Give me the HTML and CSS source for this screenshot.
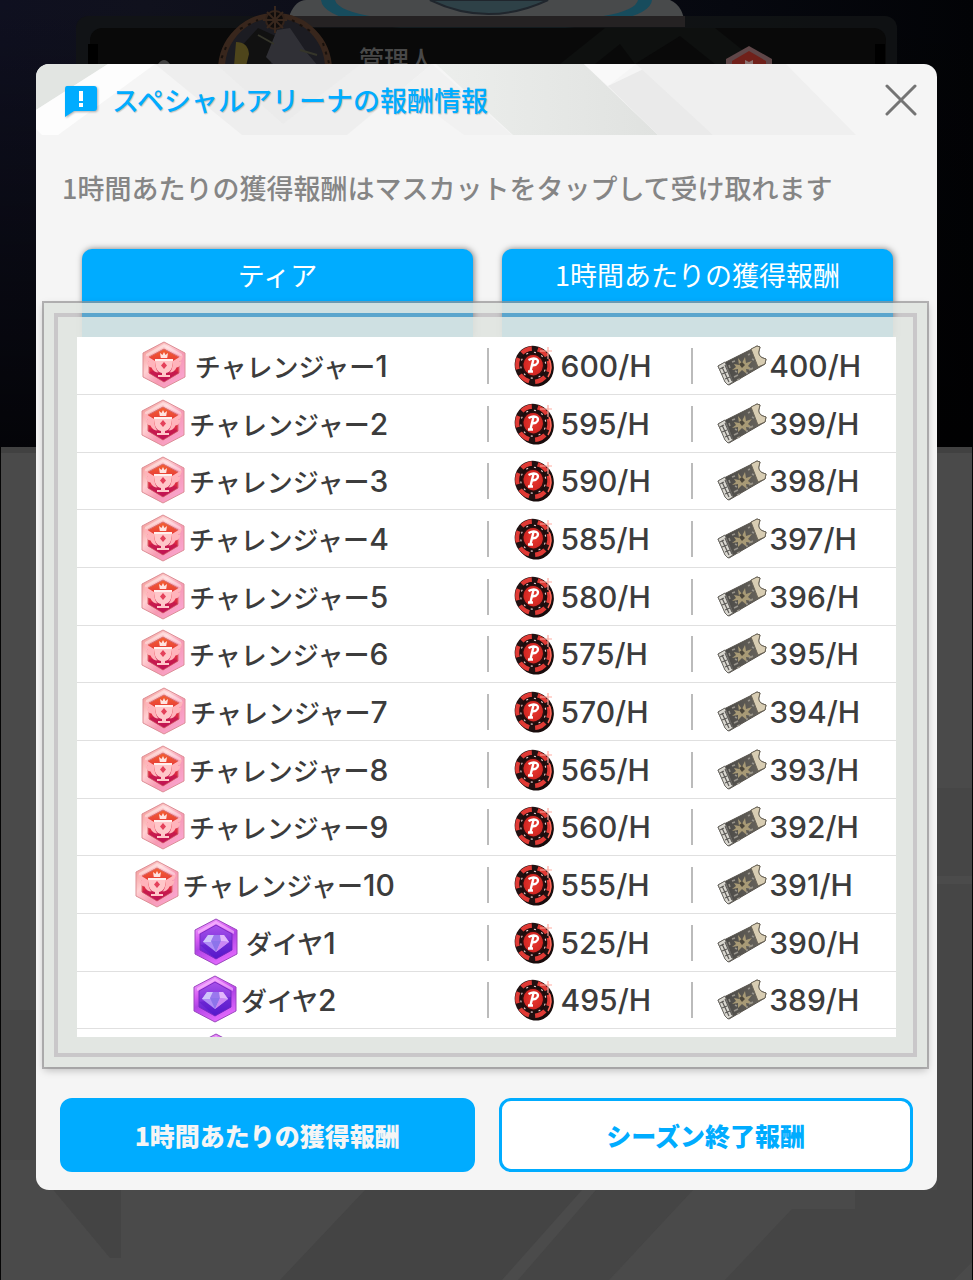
FILE: index.html
```html
<!DOCTYPE html>
<html lang="ja">
<head>
<meta charset="utf-8">
<meta name="viewport" content="width=device-width, initial-scale=1">
<title>スペシャルアリーナの報酬情報</title>
<link rel="stylesheet" href="styles.css">
</head>
<body>
<svg class="defs" aria-hidden="true">
  <defs>
    <linearGradient id="rim-red" x1="0" y1="0" x2="1" y2="1"><stop offset="0" stop-color="#f08a86"/><stop offset=".35" stop-color="#ffd0d2"/><stop offset=".6" stop-color="#f79ab4"/><stop offset="1" stop-color="#fba8dc"/></linearGradient>
    <linearGradient id="core-red" x1="0" y1="0" x2="0" y2="1"><stop offset="0" stop-color="#f4622f"/><stop offset=".5" stop-color="#e2303c"/><stop offset="1" stop-color="#c9145a"/></linearGradient>
    <linearGradient id="rim-violet" x1="0" y1="0" x2=".4" y2="1"><stop offset="0" stop-color="#f9b4ff"/><stop offset=".4" stop-color="#d75cf4"/><stop offset=".6" stop-color="#b043e6"/><stop offset="1" stop-color="#df66fb"/></linearGradient>
    <linearGradient id="core-violet" x1="0" y1="0" x2="0" y2="1"><stop offset="0" stop-color="#a850ea"/><stop offset="1" stop-color="#5a1bd0"/></linearGradient>
    <radialGradient id="chip-red"><stop offset="0" stop-color="#e8382e"/><stop offset="1" stop-color="#cf2421"/></radialGradient>
    <linearGradient id="ticket-dark" x1="0" y1="0" x2="1" y2="0"><stop offset="0" stop-color="#454442"/><stop offset="1" stop-color="#6c6860"/></linearGradient>

    <symbol id="challenger" viewBox="0 0 44 48">
      <path d="M22 1 43 12v24L22 47 1 36V12z" fill="url(#rim-red)" stroke="#dd8f96" stroke-width="1"/>
      <path d="M22 3 40 13v3L22 6 4 16v-3z" fill="#fff" opacity=".4"/>
      <path d="M22 8 37 16v16l-15 9-15-9V16z" fill="url(#core-red)" stroke="#d96a6f" stroke-width="1"/>
      <path d="M22 41 7 32l7-4h16l7 4z" fill="#b80f52" opacity=".5"/>
      <path d="m18 12 2.500 2L22 11l1.500 3 2.500-2-.8 5h-6.400z" fill="#ffe3df"/>
      <path d="M13 18h18c0 9-2 13-7 14v2h4v2H16v-2h4v-2c-5-1-7-5-7-14z" fill="#ffc6c9"/>
      <path d="M13 20 3 14c.5 4 2 6 4 7-1.500 0-2 0-2.500-.5.5 4 2.500 5.500 5 6 1 3 4 5 7 5-2-2-3.500-6-3.500-11.500zM31 20l10-6c-.5 4-2 6-4 7 1.500 0 2 0 2.500-.5-.5 4-2.500 5.500-5 6-1 3-4 5-7 5 2-2 3.500-6 3.500-11.500z" fill="#ffb4bb"/>
      <path d="M13 18h18v2H13z" fill="#fff0ee"/>
      <path d="m22 21 3 3.500-3 3.500-3-3.500z" fill="#e4405a"/>
    </symbol>
    <symbol id="diamond" viewBox="0 0 44 48">
      <path d="M22 1 43 12v24L22 47 1 36V12z" fill="url(#rim-violet)" stroke="#9a48bd" stroke-width="1"/>
      <path d="M22 3 40 13v3L22 6 4 16v-3z" fill="#ffd6ff" opacity=".5"/>
      <path d="M22 7 38 16v16l-16 9-16-9V16z" fill="url(#core-violet)" stroke="#7b2bc4" stroke-width="1"/>
      <path d="M6 27 22 41 38 32V22z" fill="#4c12c4" opacity=".35"/>
      <path d="M14 17h16l5 7-13 10L9 24z" fill="#b08ef6"/>
      <path d="m14 17-5 7h8l3-7z" fill="#cfc4fb"/><path d="M20 17h6l1 6H17z" fill="#9a78ee"/><path d="m26 17 1 6 8 1-5-7z" fill="#e2b6fb"/><path d="m17 23 5 11 5-11z" fill="#8d74ea"/><path d="m27 23-5 11 13-10z" fill="#cb86f4"/>
    </symbol>
    <symbol id="chip" viewBox="0 0 42 44">
      <g transform="rotate(-16 21 22)">
        <ellipse cx="22" cy="23" rx="18.500" ry="20" fill="#180c0c"/>
        <ellipse cx="20.500" cy="21" rx="18.500" ry="19.500" fill="#211112"/>
        <ellipse cx="20.500" cy="21" rx="15.500" ry="16.500" fill="none" stroke="#e03a35" stroke-width="5" stroke-dasharray="11 5.800"/>
        <ellipse cx="20.500" cy="21" rx="12.500" ry="13" fill="none" stroke="#1c0d0d" stroke-width="3"/>
        <ellipse cx="20.500" cy="21" rx="12.500" ry="13" fill="none" stroke="#e9cfcf" stroke-width="1.200" stroke-dasharray="2 6"/>
        <ellipse cx="20.500" cy="21" rx="10.500" ry="11" fill="url(#chip-red)" stroke="#2b0f0f" stroke-width="1.500"/>
      </g>
      <path d="M17.500 27 20.500 15M15.500 16c6-3 11-1 9 3-1.500 2.500-4 2.500-6 2M15 27.500h5" fill="none" stroke="#fff" stroke-width="2.400"/>
      <path d="M27 7h12M35 3v12" stroke="#ffaca2" stroke-width="1.200"/><path d="M36 15c3 6 2 13-1 18" fill="none" stroke="#ff6c5c" stroke-width="1.500"/>
    </symbol>
    <symbol id="ticket" viewBox="0 0 50 42">
      <path d="M1 21 35 4l5-3 3 1-1 4c-1 3 1 6 4 7l3 1-1 5L12 40l-3-2z" fill="url(#ticket-dark)" stroke="#57534c" stroke-width="1"/>
      <path d="m34 4 6-3 3 1-1 4c-1 3 1 6 4 7l3 1-1 5-7 3z" fill="#d8cdb3" stroke="#6b6558" stroke-width="1"/>
      <path d="m1 21 7-4 8 20-5 3-3-3z" fill="#d9d7d0" stroke="#6a6863" stroke-width="1"/>
      <path d="m5 22 7 15M8 20l7 16M3 24l4-2M5 29l5-2M8 34l5-2" stroke="#5d5b58" stroke-width="1.200"/>
      <path d="m17 19 5 1-1-7 4 5 3-6 1 6 6-2-4 5 5 4-7-1 1 5-5-4-4 4 0-5-6 1 4-3z" fill="#a89a76"/>
      <path d="m22 19 3-2 3 3-3 3z" fill="#4d473b"/>
      <path d="m15 17 3-1M17 32l4-2M31 10l2-1M32 25l4-2M18 26l2 1M29 28l2 0M12 20l1 3M35 14l2 1M20 35l3-1" stroke="#96928a" stroke-width="1.500"/>
    </symbol>
  </defs>
</svg>

<svg class="scene" viewBox="0 0 973 1280" preserveAspectRatio="none" aria-hidden="true">
  <defs>
    <linearGradient id="night" x1="0" y1="0" x2="1" y2="0"><stop offset="0" stop-color="#0f1020"/><stop offset=".15" stop-color="#10111d"/><stop offset=".75" stop-color="#06080f"/><stop offset="1" stop-color="#020306"/></linearGradient>
    <linearGradient id="dusk" x1="0" y1="0" x2="0" y2="1"><stop offset="0" stop-color="#000" stop-opacity="0"/><stop offset="1" stop-color="#000" stop-opacity=".75"/></linearGradient>
    <clipPath id="avatar"><circle cx="275" cy="68" r="50"/></clipPath>
  </defs>
  <path d="M0 0h973v450H0z" fill="url(#night)"/>
  <path d="M0 0h973v450H0z" fill="url(#dusk)"/>
  <path d="M290 14Q296 0 306 0h364q14 6 15 27H290z" fill="#484a4b"/>
  <path d="M321 0q3 30 167 32Q650 28 652 0h-14q-4 22-150 24Q340 22 335 0z" fill="#174c5d"/>
  <path d="M430 0q58 28 118 0z" fill="#2e4147" stroke="#20262d" stroke-width="2"/>
  <rect x="76" y="16" width="821" height="60" rx="12" fill="#111415" opacity=".86"/>
  <path d="M290 16h395v11H290z" fill="#252223"/>
  <rect x="90" y="28" width="796" height="50" rx="12" fill="#090909"/>
  <path d="m560 64 45-36h110l45 36h-45l-35-28-45 28-15-20-25 20z" fill="#0e100f"/>
  <path d="M88 44h10v20H88zM875 44h10v20h-10z" fill="#000"/>
  <path d="M158 64q6-8 12 0z" fill="#414141"/>
  <circle cx="275" cy="70" r="53" fill="#191817" stroke="#38261c" stroke-width="8"/>
  <g clip-path="url(#avatar)"><path d="M225 10h100v60H225z" fill="#1c1c22"/><path d="m238 50 20-22 22 10-12 32h-30z" fill="#111"/><path d="m277 30 13-2 17 25 12 14h-43l-10-10z" fill="#303036"/><path d="M236 42q12 0 13 12l-3 12h-12z" fill="#4e451b"/><path d="m258 35 16 9M300 50l17 5" stroke="#35352a" stroke-width="2"/></g>
  <path d="M240 29 258 20M226 47l-6 15M292 20l20 12M323 43l6 20" stroke="#18110d" stroke-width="2" stroke-dasharray="3 6"/>
  <circle cx="275" cy="20" r="9" fill="#100d0c" stroke="#33231a" stroke-width="2"/>
  <path d="M275 6v27M263 20h24M267 12l16 16M283 12l-16 16" stroke="#38271d" stroke-width="2"/>
  <text class="scene-name" x="359" y="69">管理人</text>
  <path d="m749 46 23 13v15h-46V59z" fill="#5f4648"/><path d="m749 51 17 10v9h-34v-9z" fill="#70201a"/><path d="m745 60 4 2 4-2v6h-8z" fill="#8b7473"/>
  <path d="M0 447h973v833H0z" fill="#4a4a4a"/>
  <path d="M0 447h973v6H0z" fill="#414141"/>
  <path d="M0 1010h36l60 150H0zM937 788h36v492h-36z" fill="#464646"/>
  <path d="M937 876h36v8h-36z" fill="#4b4b4b"/>
  <path d="M45 1180h76v78h-11zM365 1190h232l-88 90H280z" fill="#444"/>
  <path d="M690 1190h283v90H610z" fill="#4a4a4a"/>
  <path d="M597 1190h96l-84 90H502z" fill="#454545"/>
  <path d="M582 1190h14l-78 90h-16z" fill="#4b4b4b"/>
  <path d="M855 1190v19h-63l-67 71h229l19-19v-71z" fill="#454545"/>
  <path d="M0 447h1v833H0zM972 447h1v833h-1z" fill="#050505"/>
</svg>

<main class="dialog" role="dialog" aria-labelledby="title">
  <header class="dialog-head">
    <svg class="facets" viewBox="0 0 901 71" preserveAspectRatio="none" aria-hidden="true">
      <defs><linearGradient id="facet" x1="0" y1="0" x2="1" y2="0"><stop offset="0" stop-color="#eceeec"/><stop offset="1" stop-color="#e0e2e0"/></linearGradient></defs>
      <path d="M0 0h72L0 46z" fill="#e2e5e2"/>
      <path d="M72 0h47L22 71H6l-6-6V46z" fill="#fdfdfd"/>
      <path d="M119 0h277l-85 71H206z" fill="#eee"/>
      <path d="M180 0h145l-78 60z" fill="#ebebeb"/>
      <path d="m396 0 80 71h-48l-62-46z" fill="#f1f1f1"/>
      <path d="M400 0h148l74 71H477z" fill="url(#facet)"/>
      <path d="M548 0h52l-28 22z" fill="#f9f9f9"/>
      <path d="m572 22 46-22 59 71h-55z" fill="#eaeaea"/>
      <path d="M600 0h150l70 71H677z" fill="#efefef"/>
    </svg>
    <svg class="notice" viewBox="0 0 34 32" aria-hidden="true"><path d="M3 0h27q3 0 3 3v19q0 3-3 3H10l-9 6V3q0-3 2-3z" fill="#00acff"/><path d="M15 5h4v10h-4zM15 17h4v4h-4z" fill="#fff"/></svg>
    <h1 class="title" id="title">スペシャルアリーナの報酬情報</h1>
    <button class="close" type="button" aria-label="閉じる"><svg viewBox="0 0 32 32" aria-hidden="true"><path d="m2 2 28 28M30 2 2 30" fill="none" stroke="#747474" stroke-width="3" stroke-linecap="round"/></svg></button>
  </header>

  <p class="lead">1時間あたりの獲得報酬はマスカットをタップして受け取れます</p>

  <div class="columns">
    <div class="column-tab">ティア</div>
    <div class="column-tab">1時間あたりの獲得報酬</div>
  </div>

  <section class="frame">
    <div class="frame-inner">
      <div class="scroller">
        <table class="rewards" aria-label="1時間あたりの獲得報酬">
          <tbody>
            <tr><td class="tier"><span class="item long"><svg class="badge"><use href="#challenger"/></svg><span>チャレンジャー<span class="num">1</span></span></span></td><td><span class="item num"><svg class="chip"><use href="#chip"/></svg>600/H</span></td><td><span class="item num"><svg class="ticket"><use href="#ticket"/></svg>400/H</span></td></tr>
            <tr><td class="tier"><span class="item long"><svg class="badge"><use href="#challenger"/></svg><span>チャレンジャー<span class="num">2</span></span></span></td><td><span class="item num"><svg class="chip"><use href="#chip"/></svg>595/H</span></td><td><span class="item num"><svg class="ticket"><use href="#ticket"/></svg>399/H</span></td></tr>
            <tr><td class="tier"><span class="item long"><svg class="badge"><use href="#challenger"/></svg><span>チャレンジャー<span class="num">3</span></span></span></td><td><span class="item num"><svg class="chip"><use href="#chip"/></svg>590/H</span></td><td><span class="item num"><svg class="ticket"><use href="#ticket"/></svg>398/H</span></td></tr>
            <tr><td class="tier"><span class="item long"><svg class="badge"><use href="#challenger"/></svg><span>チャレンジャー<span class="num">4</span></span></span></td><td><span class="item num"><svg class="chip"><use href="#chip"/></svg>585/H</span></td><td><span class="item num"><svg class="ticket"><use href="#ticket"/></svg>397/H</span></td></tr>
            <tr><td class="tier"><span class="item long"><svg class="badge"><use href="#challenger"/></svg><span>チャレンジャー<span class="num">5</span></span></span></td><td><span class="item num"><svg class="chip"><use href="#chip"/></svg>580/H</span></td><td><span class="item num"><svg class="ticket"><use href="#ticket"/></svg>396/H</span></td></tr>
            <tr><td class="tier"><span class="item long"><svg class="badge"><use href="#challenger"/></svg><span>チャレンジャー<span class="num">6</span></span></span></td><td><span class="item num"><svg class="chip"><use href="#chip"/></svg>575/H</span></td><td><span class="item num"><svg class="ticket"><use href="#ticket"/></svg>395/H</span></td></tr>
            <tr><td class="tier"><span class="item long"><svg class="badge"><use href="#challenger"/></svg><span>チャレンジャー<span class="num">7</span></span></span></td><td><span class="item num"><svg class="chip"><use href="#chip"/></svg>570/H</span></td><td><span class="item num"><svg class="ticket"><use href="#ticket"/></svg>394/H</span></td></tr>
            <tr><td class="tier"><span class="item long"><svg class="badge"><use href="#challenger"/></svg><span>チャレンジャー<span class="num">8</span></span></span></td><td><span class="item num"><svg class="chip"><use href="#chip"/></svg>565/H</span></td><td><span class="item num"><svg class="ticket"><use href="#ticket"/></svg>393/H</span></td></tr>
            <tr><td class="tier"><span class="item long"><svg class="badge"><use href="#challenger"/></svg><span>チャレンジャー<span class="num">9</span></span></span></td><td><span class="item num"><svg class="chip"><use href="#chip"/></svg>560/H</span></td><td><span class="item num"><svg class="ticket"><use href="#ticket"/></svg>392/H</span></td></tr>
            <tr><td class="tier"><span class="item long"><svg class="badge"><use href="#challenger"/></svg><span>チャレンジャー<span class="num">10</span></span></span></td><td><span class="item num"><svg class="chip"><use href="#chip"/></svg>555/H</span></td><td><span class="item num"><svg class="ticket"><use href="#ticket"/></svg>391/H</span></td></tr>
            <tr><td class="tier"><span class="item short"><svg class="badge"><use href="#diamond"/></svg><span>ダイヤ<span class="num">1</span></span></span></td><td><span class="item num"><svg class="chip"><use href="#chip"/></svg>525/H</span></td><td><span class="item num"><svg class="ticket"><use href="#ticket"/></svg>390/H</span></td></tr>
            <tr><td class="tier"><span class="item short"><svg class="badge"><use href="#diamond"/></svg><span>ダイヤ<span class="num">2</span></span></span></td><td><span class="item num"><svg class="chip"><use href="#chip"/></svg>495/H</span></td><td><span class="item num"><svg class="ticket"><use href="#ticket"/></svg>389/H</span></td></tr>
            <tr class="upcoming"><td class="tier"><span class="item short"><svg class="badge"><use href="#diamond"/></svg></span></td><td><span class="item"><svg class="chip"><use href="#chip"/></svg></span></td><td><span class="item"><svg class="ticket"><use href="#ticket"/></svg></span></td></tr>
          </tbody>
        </table>
      </div>
    </div>
  </section>

  <footer class="actions">
    <button class="action action-on" type="button">1時間あたりの獲得報酬</button>
    <button class="action" type="button">シーズン終了報酬</button>
  </footer>
</main>
</body>
</html>
```
FILE: styles.css
```css
* { box-sizing: border-box; }

:root {
  --blue: #00acff;
  --panel: rgba(224, 228, 224, .92);
}

body {
  position: relative;
  display: flex;
  height: 100vh;
  margin: 0;
  padding: 64px 36px 90px;
  overflow: hidden;
  background: #4a4a4a;
  font-family: "Noto Sans CJK JP", sans-serif;
}

.defs { position: absolute; width: 0; height: 0; }

.scene {
  position: absolute;
  inset: 0;
  width: 100%;
  height: 100%;
}

.scene-name { font-size: 25px; font-weight: 500; fill: #484848; }

.dialog {
  position: relative;
  display: flex;
  flex: 1;
  flex-direction: column;
  min-width: 0;
  overflow: hidden;
  border-radius: 13px;
  background: #f5f5f5;
}

.dialog-head {
  position: relative;
  display: flex;
  align-items: center;
  height: 71px;
  flex: none;
  padding: 0 20px 0 28px;
}

.facets { position: absolute; inset: 0; width: 100%; height: 100%; }

.notice {
  position: relative;
  width: 34px;
  height: 32px;
  margin: 4px 14px 0 0;
  filter: drop-shadow(1px 1px 1px rgba(0, 0, 0, .3));
}

.title {
  position: relative;
  flex: 1;
  margin: 0;
  color: var(--blue);
  font-size: 27px;
  font-weight: 500;
  line-height: 40px;
  text-shadow: 1px 1px 1px rgba(0, 0, 0, .2);
}

.close {
  position: relative;
  width: 32px;
  height: 32px;
  padding: 0;
  border: 0;
  background: none;
  cursor: pointer;
}

.close svg { display: block; width: 32px; height: 32px; }

.lead {
  flex: none;
  margin: 33px 24px 41px 26px;
  color: #858585;
  font-size: 27px;
  font-weight: 500;
  line-height: 40px;
}

.columns {
  display: grid;
  flex: none;
  grid-template-columns: 1fr 1fr;
  gap: 29px;
  margin: 0 44px 0 46px;
}

.column-tab {
  height: 88px;
  padding-top: 6px;
  border-radius: 10px 10px 0 0;
  background: var(--blue);
  box-shadow: 1px 0 6px rgba(0, 0, 0, .5);
  color: #fff;
  font-size: 27px;
  line-height: 40px;
  text-align: center;
}

.frame {
  position: relative;
  display: flex;
  flex: 1;
  min-height: 0;
  margin: -34px 10px 0 8px;
  border: 10px solid var(--panel);
  box-shadow: 0 0 0 2px rgba(150, 148, 150, .7), 0 3px 8px rgba(0, 0, 0, .25);
}

.frame-inner {
  display: flex;
  flex: 1;
  min-width: 0;
  padding: 20px 17px 16px 19px;
  border: 4px solid rgba(164, 160, 164, .55);
  background: var(--panel);
  background-clip: padding-box;
}

.scroller {
  flex: 1;
  min-width: 0;
  overflow-y: auto;
  background: #fff;
  scrollbar-width: none;
}

.rewards {
  width: 100%;
  border-collapse: separate;
  border-spacing: 0;
  table-layout: fixed;
}

.rewards tr { height: 58px; }
.rewards tr:nth-child(3n) { height: 57px; }

.rewards td {
  padding: 0 0 0 26px;
  border-bottom: 1px solid #e0e0e0;
  background: linear-gradient(#bbb, #bbb) left center / 2px 36px no-repeat;
  color: #3c3c3c;
  font-size: 26px;
  line-height: 36px;
}

.rewards .tier {
  width: 50%;
  padding: 0 34px 0 0;
  background: none;
  font-weight: 500;
  text-align: center;
}

.item { display: inline-flex; align-items: center; height: 48px; vertical-align: middle; }
.long, .short { justify-content: space-between; }
.long { min-width: 246px; }
.short { min-width: 142px; }

.num { font-family: Inter, "Liberation Sans", sans-serif; font-size: 30px; font-weight: 500; }

.badge { width: 44px; height: 48px; margin: 0 4px 2px 0; }
.chip { width: 42px; height: 44px; margin-right: 6px; }
.ticket { width: 50px; height: 42px; margin-right: 2px; }

.upcoming td { background: none; }

.actions {
  display: grid;
  flex: none;
  grid-template-columns: 1fr 1fr;
  gap: 24px;
  padding: 31px 24px 18px;
}

.action {
  height: 74px;
  border: 3px solid var(--blue);
  border-radius: 12px;
  background: #fff;
  color: var(--blue);
  font-family: inherit;
  font-size: 25px;
  font-weight: 900;
  line-height: 36px;
  cursor: pointer;
}

.action-on { background: var(--blue); color: #f5f5f5; }
```
